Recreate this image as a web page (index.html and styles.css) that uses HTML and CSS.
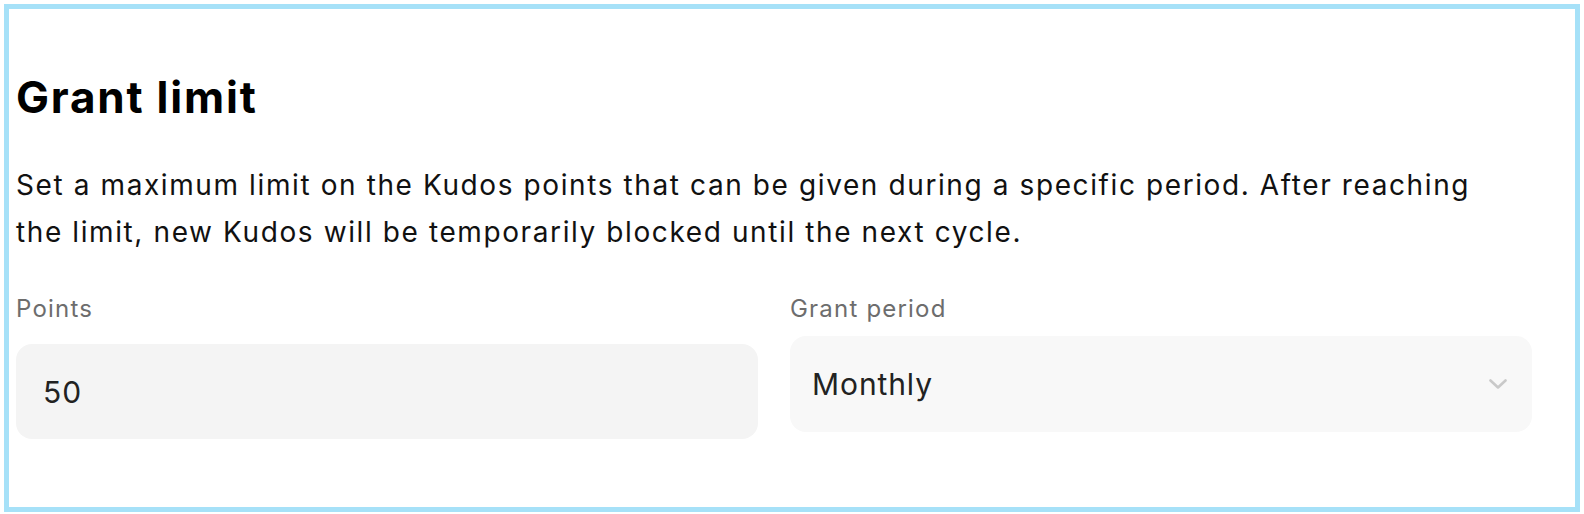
FILE: index.html
```html
<!DOCTYPE html>
<html>
<head>
<meta charset="utf-8">
<link rel="stylesheet" href="styles.css">
</head>
<body>
<div class="frame">
  <section class="card">
    <h1 class="title">Grant limit</h1>
    <p class="desc">Set a maximum limit on the Kudos points that can be given during a specific period. After reaching the limit, new Kudos will be temporarily blocked until the next cycle.</p>
    <div class="fields">
      <div class="field">
        <label class="label">Points</label>
        <div class="input input-points">50</div>
      </div>
      <div class="field">
        <label class="label">Grant period</label>
        <div class="input input-select">
          <span>Monthly</span>
          <svg class="chev" width="18" height="10" viewBox="0 0 18 10"><path d="M1.5 1.5 L9 8.5 L16.5 1.5" fill="none" stroke="#c9c9c9" stroke-width="2.6" stroke-linecap="round" stroke-linejoin="round"/></svg>
        </div>
      </div>
    </div>
  </section>
</div>
</body>
</html>
```

FILE: styles.css
```css
html, body {
  margin: 0;
  padding: 0;
  background: #fff;
}
.frame {
  margin: 4px 4px 2px 4px;
  height: 508px;
  box-sizing: border-box;
  border: 5px solid #a6e1f8;
  padding: 0 43px 0 7px;
  font-family: Inter, "Noto Sans", sans-serif;
}
.card {
  padding-top: 62px;
}
.title {
  margin: 0;
  font-size: 44px;
  font-weight: 700;
  line-height: 52px;
  color: #000;
  letter-spacing: 1.8px;
}
.desc {
  max-width: 1480px;
  margin: 39px 0 0;
  font-size: 28px;
  line-height: 47px;
  color: #111;
  letter-spacing: 1.6px;
}
.fields {
  display: grid;
  grid-template-columns: 1fr 1fr;
  gap: 32px;
  margin-top: 35px;
}
.field {
  display: flex;
  flex-direction: column;
}
.label {
  padding-top: 2px;
  font-size: 24px;
  line-height: 32px;
  color: #6d6d6d;
  letter-spacing: 1.2px;
}
.input {
  margin-top: 11px;
  height: 96px;
  border-radius: 16px;
  box-sizing: border-box;
  display: flex;
  align-items: center;
  font-size: 30px;
  color: #222;
  letter-spacing: 0.9px;
}
.input-points {
  margin-top: 19px;
  height: 95px;
  background: #f4f4f4;
  padding-left: 27px;
}
.input-select {
  background: #f8f8f8;
  padding: 0 25px 0 22px;
  justify-content: space-between;
}
.chev {
  display: block;
}
```
